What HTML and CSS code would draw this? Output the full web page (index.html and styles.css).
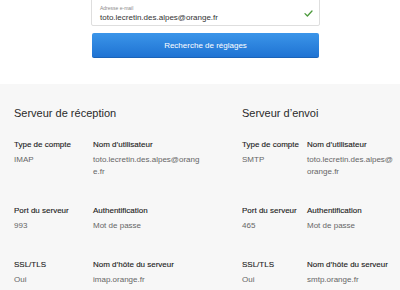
FILE: index.html
```html
<!DOCTYPE html>
<html lang="fr">
<head>
<meta charset="utf-8">
<link rel="stylesheet" href="styles.css">
</head>
<body>
<div class="top">
  <div class="form">
    <div class="field">
      <div class="field-text">
        <span class="field-label">Adresse e-mail</span>
        <span class="field-value">toto.lecretin.des.alpes@orange.fr</span>
      </div>
      <svg class="check" width="9" height="7" viewBox="0 0 9 7"><path d="M1 3.6 L3.4 6 L8 1" fill="none" stroke="#4c9a3c" stroke-width="1.3" stroke-linecap="round" stroke-linejoin="round"/></svg>
    </div>
    <button class="btn">Recherche de réglages</button>
  </div>
</div>
<div class="results">
  <section class="server">
    <h2 class="title">Serveur de réception</h2>
    <div class="grid grid-in">
      <div class="item"><div class="label">Type de compte</div><div class="value">IMAP</div></div>
      <div class="item"><div class="label">Nom d’utilisateur</div><div class="value">toto.lecretin.des.alpes@orange.fr</div></div>
      <div class="item"><div class="label">Port du serveur</div><div class="value">993</div></div>
      <div class="item"><div class="label">Authentification</div><div class="value">Mot de passe</div></div>
      <div class="item"><div class="label">SSL/TLS</div><div class="value">Oui</div></div>
      <div class="item"><div class="label">Nom d’hôte du serveur</div><div class="value">imap.orange.fr</div></div>
    </div>
  </section>
  <section class="server">
    <h2 class="title">Serveur d’envoi</h2>
    <div class="grid grid-out">
      <div class="item"><div class="label">Type de compte</div><div class="value">SMTP</div></div>
      <div class="item"><div class="label">Nom d’utilisateur</div><div class="value">toto.lecretin.des.alpes@orange.fr</div></div>
      <div class="item"><div class="label">Port du serveur</div><div class="value">465</div></div>
      <div class="item"><div class="label">Authentification</div><div class="value">Mot de passe</div></div>
      <div class="item"><div class="label">SSL/TLS</div><div class="value">Oui</div></div>
      <div class="item"><div class="label">Nom d’hôte du serveur</div><div class="value">smtp.orange.fr</div></div>
    </div>
  </section>
</div>
</body>
</html>
```
FILE: styles.css
```css
* { box-sizing: border-box; }
html, body { margin: 0; padding: 0; }
body {
  width: 400px;
  height: 290px;
  overflow: hidden;
  background: #fff;
  font-family: "Liberation Sans", Arial, sans-serif;
  color: #333;
}
.top {
  height: 84px;
  background: #fff;
}
.form {
  width: 229px;
  margin-left: 91px;
  display: flex;
  flex-direction: column;
}
.field {
  height: 30px;
  margin-top: -4px;
  border: 1px solid #dedede;
  border-radius: 2px;
  display: flex;
  align-items: center;
  justify-content: space-between;
  padding: 0 6px 0 8px;
  background: #fff;
}
.field-text {
  display: flex;
  flex-direction: column;
  padding-top: 5px;
}
.field-label {
  font-size: 5px;
  line-height: 7px;
  color: #8a8a8a;
}
.field-value {
  font-size: 8px;
  line-height: 11px;
  color: #333;
}
.check { margin-top: 4px; }
.btn {
  margin: 7px 1px 0 1px;
  height: 25px;
  border: 0;
  border-bottom: 1px solid #1a63b8;
  border-radius: 2px;
  background: linear-gradient(#3b95e9, #1f73d3);
  color: #fff;
  font-family: "Liberation Sans", Arial, sans-serif;
  font-size: 8px;
  padding: 0;
}
.results {
  background: #f7f7f7;
  height: 206px;
  padding: 22px 5px 0 14px;
  display: grid;
  grid-template-columns: 187px 1fr;
  column-gap: 41px;
}
.title {
  margin: 0 0 18px 0;
  font-size: 11px;
  line-height: 14px;
  font-weight: normal;
  color: #2a2a2a;
}
.grid {
  display: grid;
  row-gap: 26px;
}
.grid-in { grid-template-columns: 79px 1fr; }
.grid-out { grid-template-columns: 65px 1fr; }
.label {
  font-size: 8px;
  line-height: 14px;
  margin-bottom: 2px;
  color: #222;
  -webkit-text-stroke: 0.12px #222;
}
.value {
  font-size: 8px;
  line-height: 12px;
  color: #666;
  word-break: break-all;
}
```
